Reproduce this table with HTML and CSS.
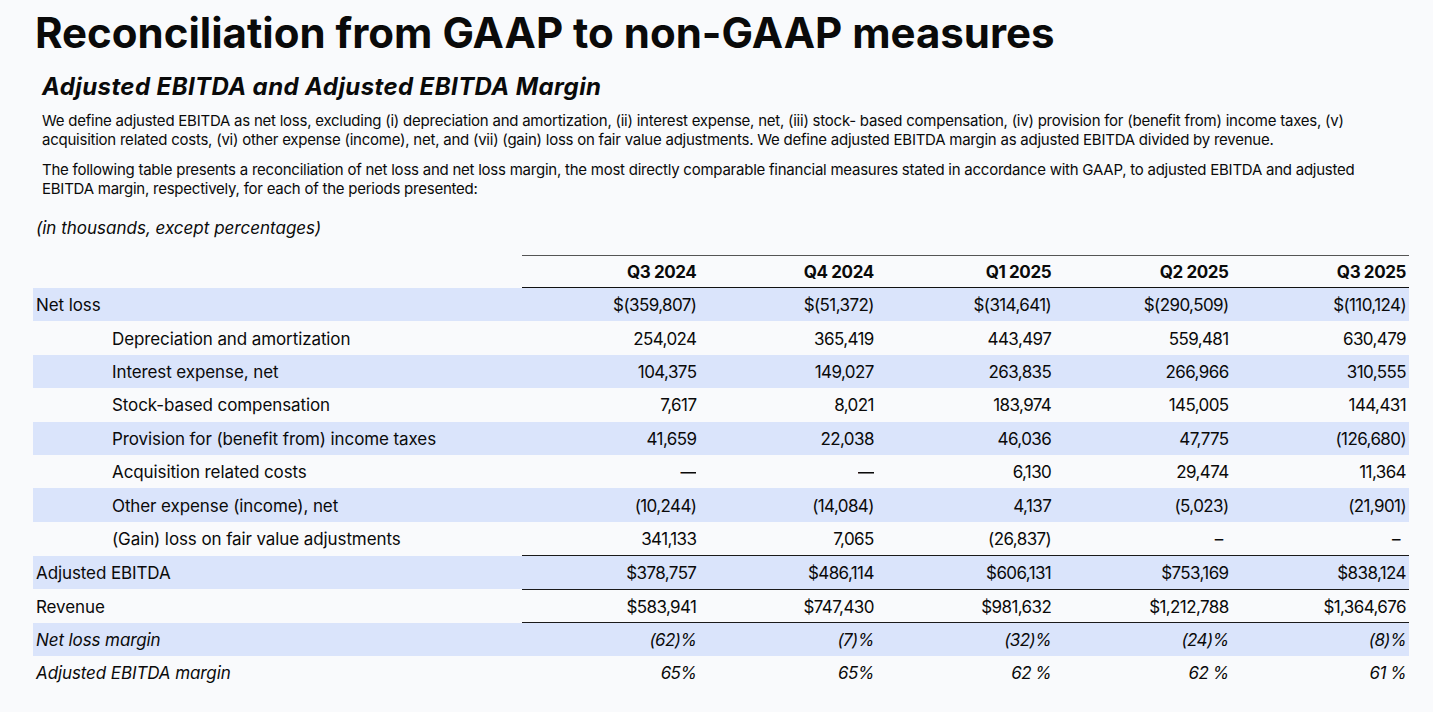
FILE: index.html
```html
<!DOCTYPE html>
<html>
<head>
<meta charset="utf-8">
<link rel="stylesheet" href="styles.css">
</head>
<body>
<div class="page">
  <h1 class="title">Reconciliation from GAAP to non-GAAP measures</h1>
  <h2 class="subtitle">Adjusted EBITDA and Adjusted EBITDA Margin</h2>
  <p class="para">We define adjusted EBITDA as net loss, excluding (i) depreciation and amortization, (ii) interest expense, net, (iii) stock- based compensation, (iv) provision for (benefit from) income taxes, (v) acquisition related costs, (vi) other expense (income), net, and (vii) (gain) loss on fair value adjustments. We define adjusted EBITDA margin as adjusted EBITDA divided by revenue.</p>
  <p class="para">The following table presents a reconciliation of net loss and net loss margin, the most directly comparable financial measures stated in accordance with GAAP, to adjusted EBITDA and adjusted EBITDA margin, respectively, for each of the periods presented:</p>
  <div class="units">(in thousands, except percentages)</div>
  <table class="recon">
    <colgroup>
      <col class="c-label"><col class="c-num"><col class="c-num"><col class="c-num"><col class="c-num"><col class="c-num">
    </colgroup>
    <thead>
      <tr><th class="blank"></th><th>Q3 2024</th><th>Q4 2024</th><th>Q1 2025</th><th>Q2 2025</th><th>Q3 2025</th></tr>
    </thead>
    <tbody>
      <tr class="shade"><td>Net loss</td><td>$(359,807)</td><td>$(51,372)</td><td>$(314,641)</td><td>$(290,509)</td><td>$(110,124)</td></tr>
      <tr><td class="ind">Depreciation and amortization</td><td>254,024</td><td>365,419</td><td>443,497</td><td>559,481</td><td>630,479</td></tr>
      <tr class="shade"><td class="ind">Interest expense, net</td><td>104,375</td><td>149,027</td><td>263,835</td><td>266,966</td><td>310,555</td></tr>
      <tr><td class="ind">Stock-based compensation</td><td>7,617</td><td>8,021</td><td>183,974</td><td>145,005</td><td>144,431</td></tr>
      <tr class="shade"><td class="ind">Provision for (benefit from) income taxes</td><td>41,659</td><td>22,038</td><td>46,036</td><td>47,775</td><td>(126,680)</td></tr>
      <tr><td class="ind">Acquisition related costs</td><td><span class="dash">—</span></td><td><span class="dash">—</span></td><td>6,130</td><td>29,474</td><td>11,364</td></tr>
      <tr class="shade"><td class="ind">Other expense (income), net</td><td>(10,244)</td><td>(14,084)</td><td>4,137</td><td>(5,023)</td><td>(21,901)</td></tr>
      <tr><td class="ind">(Gain) loss on fair value adjustments</td><td>341,133</td><td>7,065</td><td>(26,837)</td><td><span class="ndash">–</span></td><td><span class="ndash">–</span></td></tr>
      <tr class="shade rule"><td>Adjusted EBITDA</td><td>$378,757</td><td>$486,114</td><td>$606,131</td><td>$753,169</td><td>$838,124</td></tr>
      <tr class="rule"><td>Revenue</td><td>$583,941</td><td>$747,430</td><td>$981,632</td><td>$1,212,788</td><td>$1,364,676</td></tr>
      <tr class="shade rule it"><td>Net loss margin</td><td>(62)%</td><td>(7)%</td><td>(32)%</td><td>(24)%</td><td>(8)%</td></tr>
      <tr class="it"><td>Adjusted EBITDA margin</td><td>65%</td><td>65%</td><td>62 %</td><td>62 %</td><td>61 %</td></tr>
    </tbody>
  </table>
</div>
</body>
</html>
```

FILE: styles.css
```css
html, body {
  margin: 0;
  padding: 0;
  background: #f9fafc;
}
body {
  font-family: Inter, "Liberation Sans", sans-serif;
  color: #0a0a0a;
}
.page {
  padding: 8px 0 0 33px;
  width: 1376px;
}
.title {
  margin: 0 0 0 2px;
  font-size: 42px;
  font-weight: 700;
  letter-spacing: 0px;
  line-height: 50px;
}
.subtitle {
  margin: 14px 0 0 9px;
  font-size: 24px;
  font-weight: 700;
  font-style: italic;
  letter-spacing: 0.4px;
  line-height: 30px;
}
.para {
  margin: 9px 0 0 9px;
  font-size: 15px;
  line-height: 19px;
  letter-spacing: -0.24px;
  width: 1350px;
}
.para + .para {
  margin-top: 11px;
}
.units {
  margin: 19px 0 0 3px;
  font-size: 17px;
  font-style: italic;
  letter-spacing: 0px;
  line-height: 22px;
}
.recon {
  margin-top: 16px;
  border-collapse: collapse;
  width: 1376px;
  table-layout: fixed;
  font-size: 17px;
  letter-spacing: -0.6px;
}
.c-label { width: 489px; }
.c-num { width: 177.4px; }
.recon th {
  font-weight: 700;
  text-align: right;
  padding: 0 3px 0 0;
  height: 31px;
  border-top: 1.5px solid #555;
  border-bottom: 1.5px solid #111;
  letter-spacing: -0.4px;
}
.recon th.blank {
  border: none;
}
.recon td {
  height: 32.4px;
  padding: 1px 3px 0 3px;
  text-align: right;
  white-space: nowrap;
}
.recon tr.rule td {
  height: 31.6px;
}
.recon td:first-child {
  text-align: left;
  letter-spacing: -0.1px;
}
.recon td.ind {
  padding-left: 79px;
}
.recon tr.shade td {
  background: #dae4fb;
}
.recon tr.rule td + td {
  border-top: 1.5px solid #1a1a1a;
}
.recon tr.it td {
  font-style: italic;
}
.dash {
  display: inline-block;
  width: 15px;
  overflow: hidden;
  vertical-align: bottom;
  padding-right: 1px;
}
.ndash {
  padding-right: 6px;
}
```
